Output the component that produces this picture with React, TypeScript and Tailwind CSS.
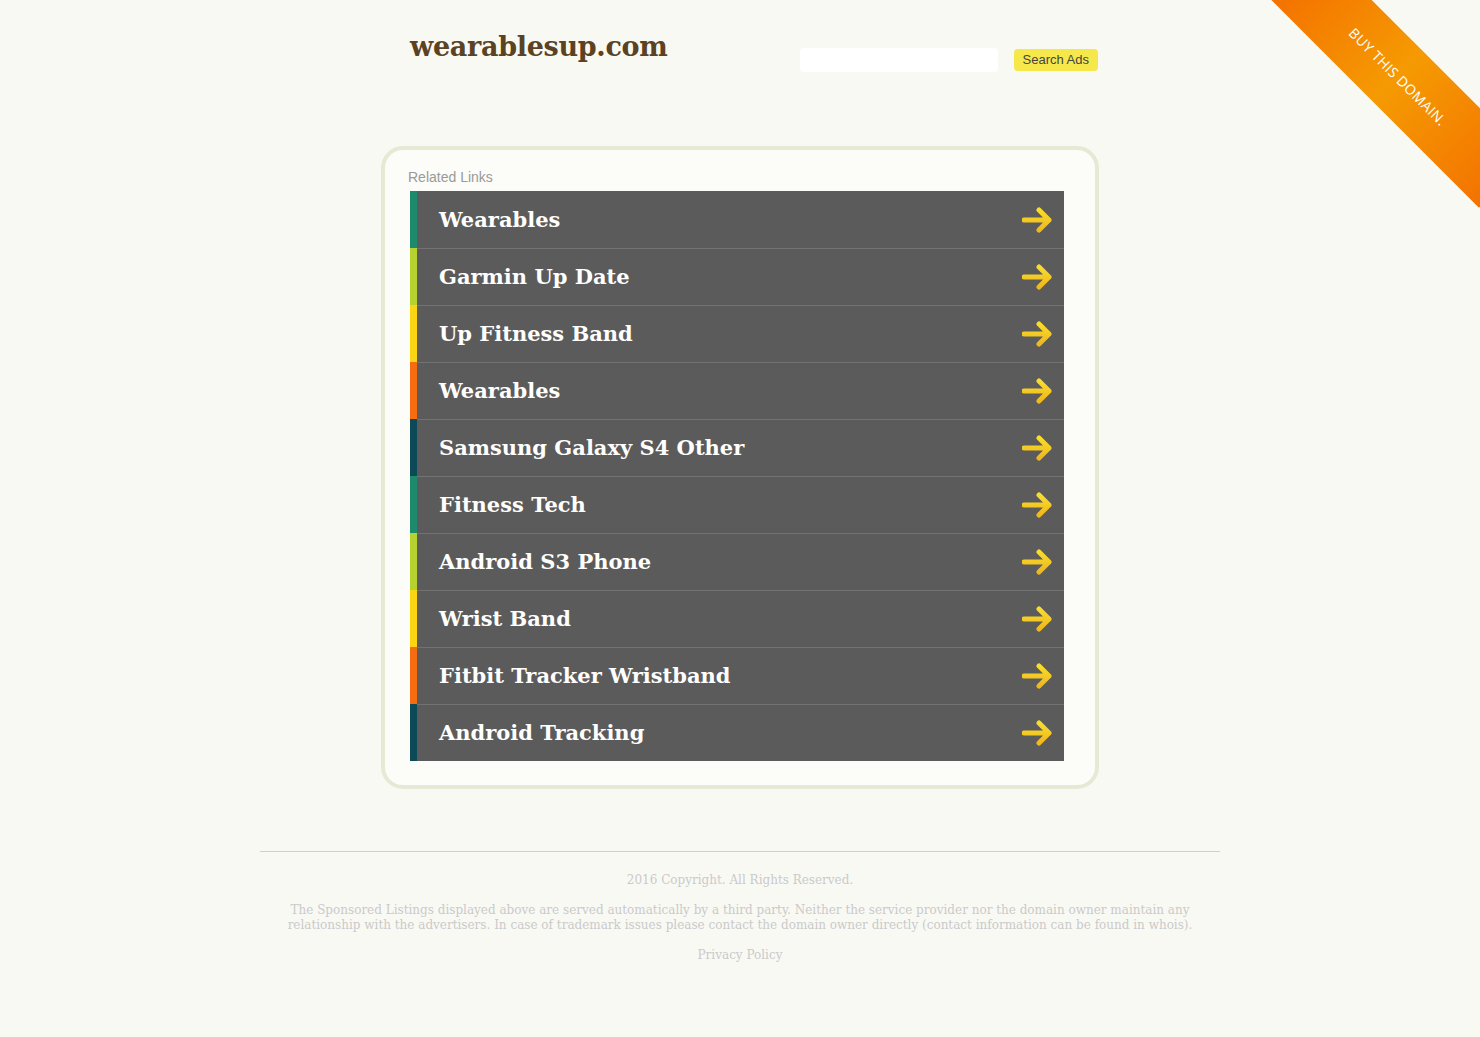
import React from "react";

const LINKS: { label: string; color: string }[] = [
  { label: "Wearables", color: "bg-[#1d8a6c]" },
  { label: "Garmin Up Date", color: "bg-[#b6d22f]" },
  { label: "Up Fitness Band", color: "bg-[#fbd514]" },
  { label: "Wearables", color: "bg-[#f66c10]" },
  { label: "Samsung Galaxy S4 Other", color: "bg-[#0c4a57]" },
  { label: "Fitness Tech", color: "bg-[#1d8a6c]" },
  { label: "Android S3 Phone", color: "bg-[#b6d22f]" },
  { label: "Wrist Band", color: "bg-[#fbd514]" },
  { label: "Fitbit Tracker Wristband", color: "bg-[#f66c10]" },
  { label: "Android Tracking", color: "bg-[#0c4a57]" },
];

function Arrow() {
  return (
    <svg width="32" height="26" viewBox="0 0 32 26" className="shrink-0">
      <defs>
        <linearGradient id="arrowFill" x1="0" y1="0" x2="0" y2="1">
          <stop offset="0" stopColor="#f9dc2c" />
          <stop offset="1" stopColor="#efb81c" />
        </linearGradient>
      </defs>
      <path
        d="M2 13 H27 M17 3 L27 13 L17 23"
        fill="none"
        stroke="url(#arrowFill)"
        strokeWidth="5"
        strokeLinecap="round"
        strokeLinejoin="round"
      />
    </svg>
  );
}

function Ribbon() {
  return (
    <div className="absolute top-0 right-0 w-[210px] h-[210px] overflow-hidden pointer-events-none">
      <div className="absolute left-[-22px] top-[41px] w-[300px] h-[71px] rotate-45 bg-gradient-to-r from-[#f36f00] via-[#f59a02] to-[#f37200] flex items-center justify-center">
        <span className="text-white text-[14px] tracking-[0.4px] font-['Open_Sans',sans-serif]">
          BUY THIS DOMAIN.
        </span>
      </div>
    </div>
  );
}

export default function App() {
  return (
    <div className="relative min-h-[1037px] bg-[#f9f9f4] font-['DejaVu_Serif',serif] overflow-hidden">
      <Ribbon />
      <div className="w-[718px] mx-auto">
        <div className="flex items-start justify-between pl-[29px] pr-[1px] pt-[30px] h-[146px]">
          <h1 className="text-[27px] leading-[34px] font-bold text-[#5a4222] tracking-[-0.3px]">
            wearablesup.com
          </h1>
          <div className="flex items-center gap-[16px] pt-[18px]">
            <input
              type="text"
              className="w-[198px] h-[24px] bg-white rounded-[4px] outline-none border-0"
            />
            <button className="h-[22px] px-[9px] rounded-[4px] bg-[#f6e84a] text-[13px] text-[#444] font-['Liberation_Sans',Arial,sans-serif]">
              Search Ads
            </button>
          </div>
        </div>

        <div className="border-4 border-[#e7e9d4] rounded-[22px] bg-[#fcfcf8] pl-[25px] pr-[31px] pt-[17px] pb-[24px]">
          <div className="ml-[-2px] mb-[4px] text-[14px] leading-[20px] text-[#9a9a9a] font-['Liberation_Sans',Arial,sans-serif]">
            Related Links
          </div>
          <div className="flex flex-col">
            {LINKS.map((l, i) => (
              <div key={i} className="flex h-[57px]">
                <div className={`w-[7px] ${l.color}`} />
                <div
                  className={`flex-1 flex items-center justify-between bg-[#5b5b5b] pl-[22px] pr-[10px] ${
                    i > 0 ? "border-t border-[#727272]" : ""
                  }`}
                >
                  <span className="text-white text-[21px] font-bold">
                    {l.label}
                  </span>
                  <Arrow />
                </div>
              </div>
            ))}
          </div>
        </div>
      </div>

      <div className="w-[960px] mx-auto mt-[62px] border-t border-[#d0d0cc] pt-[21px] text-center text-[#cacaca] text-[12px] leading-[15px]">
        <p>2016 Copyright. All Rights Reserved.</p>
        <p className="mt-[15px]">
          The Sponsored Listings displayed above are served automatically by a third party. Neither the service provider nor the domain owner maintain any
          <br />
          relationship with the advertisers. In case of trademark issues please contact the domain owner directly (contact information can be found in whois).
        </p>
        <p className="mt-[15px]">Privacy Policy</p>
      </div>
    </div>
  );
}
